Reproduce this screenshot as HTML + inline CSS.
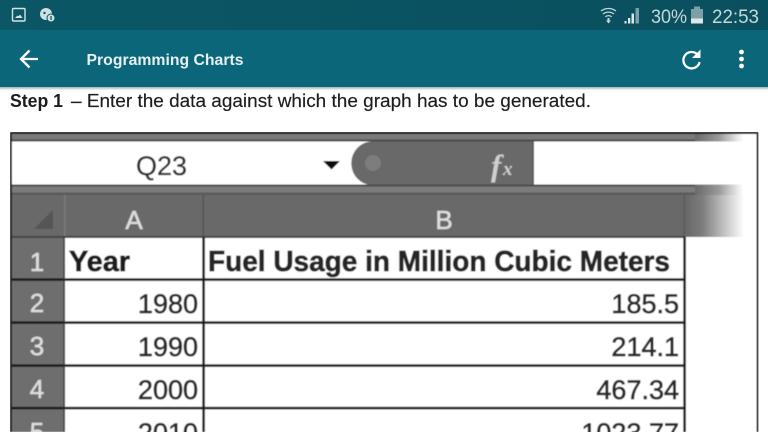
<!DOCTYPE html>
<html>
<head>
<meta charset="utf-8">
<style>
html,body{margin:0;padding:0;width:768px;height:432px;overflow:hidden;background:#fff}
svg{display:block;position:absolute;left:0;top:0}
text{font-family:"Liberation Sans",sans-serif}
</style>
</head>
<body>
<svg width="768" height="432" viewBox="0 0 768 432" xmlns="http://www.w3.org/2000/svg">
<defs>
<linearGradient id="top" x1="0" x2="1" y1="0" y2="0">
<stop offset="0" stop-color="#0b5766"/><stop offset="1" stop-color="#0a4f5e"/>
</linearGradient>
<linearGradient id="fadeH" x1="0" x2="1" y1="0" y2="0">
<stop offset="0" stop-color="#666"/><stop offset="0.3" stop-color="#7c7c7c"/><stop offset="0.7" stop-color="#c8c8c8"/><stop offset="1" stop-color="#fff"/>
</linearGradient>
<linearGradient id="fadeL" x1="0" x2="1" y1="0" y2="0">
<stop offset="0" stop-color="#6a6a6a"/><stop offset="0.5" stop-color="#9a9a9a"/><stop offset="1" stop-color="#fff"/>
</linearGradient>
<linearGradient id="shadow" x1="0" x2="0" y1="0" y2="1">
<stop offset="0" stop-color="#9fb6bb"/><stop offset="1" stop-color="#f4f6f6"/>
</linearGradient>
<filter id="soft" x="0" y="0" width="100%" height="100%"><feGaussianBlur stdDeviation="0.4"/></filter>
</defs>

<!-- status bar -->
<rect width="768" height="30" fill="url(#top)"/>
<rect x="12.500" y="8.500" width="12.500" height="12.500" rx="1" fill="none" stroke="#d5e3e6" stroke-width="1.400"/>
<path d="M15 18l2.500-2.500 1.200.8 1.300-1.800 2.600 3.500z" fill="#d5e3e6"/>
<circle cx="46" cy="14" r="6" fill="#d0dfe2"/>
<circle cx="44.500" cy="13" r="1.200" fill="#0b5766"/>
<circle cx="51" cy="18" r="4" fill="#d0dfe2" stroke="#0b5766" stroke-width="1"/>
<rect x="50.400" y="16" width="1.300" height="4" fill="#0b5766"/>

<!-- wifi -->
<path d="M601 11a12.500 12.500 0 0 1 15 0M603 14a9 9 0 0 1 11 0M605.300 16.800a5 5 0 0 1 6.400 0" fill="none" stroke="#c2d6da" stroke-width="1.300"/>
<path d="M607.500 18h2v2.500h1.500l-2.500 3-2.500-3h1.500z" fill="#c2d6da"/>
<!-- signal -->
<path d="M624.500 23.500h2v-2.500h-2zM628 23.500h2.300v-5.500h-2.300zM631.500 23.500h2.500v-10h-2.500z" fill="#dbe7e9"/>
<path d="M635.500 23.500h3.500V8h-3.500z" fill="#7d9fa7"/>
<text x="651" y="23" font-size="19" fill="#c5d8dc" textLength="36" lengthAdjust="spacingAndGlyphs">30%</text>
<rect x="691" y="9" width="12" height="14.500" fill="#7d9fa7"/>
<rect x="694" y="6.500" width="6" height="3" fill="#7d9fa7"/>
<rect x="691" y="18.500" width="12" height="5" fill="#dbe7e9"/>
<text x="712" y="23" font-size="19" fill="#c5d8dc" textLength="47" lengthAdjust="spacingAndGlyphs">22:53</text>

<!-- app bar -->
<rect y="30" width="768" height="57" fill="#0a6678"/>
<rect y="87" width="768" height="3" fill="url(#shadow)"/>
<path d="M38 59H21M29.500 50.500L21 59l8.500 8.500" fill="none" stroke="#fff" stroke-width="2.300"/>
<text x="86.500" y="65" font-size="16" font-weight="700" fill="#e6f0f2" textLength="157" lengthAdjust="spacingAndGlyphs">Programming Charts</text>
<path d="M697.500 54.500A8.200 8.200 0 1 0 699.600 62" fill="none" stroke="#fff" stroke-width="2.300"/>
<path d="M700.500 49.500v8.500h-8.500z" fill="#fff"/>
<circle cx="741.500" cy="52" r="2.400" fill="#fff"/>
<circle cx="741.500" cy="59" r="2.400" fill="#fff"/>
<circle cx="741.500" cy="66" r="2.400" fill="#fff"/>

<!-- step text -->
<text x="10" y="107" font-size="18" font-weight="700" fill="#1c1c1c" textLength="53" lengthAdjust="spacingAndGlyphs">Step 1</text>
<text x="71" y="107" font-size="18.500" fill="#1c1c1c" stroke="#1c1c1c" stroke-width="0.150" textLength="520" lengthAdjust="spacingAndGlyphs">– Enter the data against which the graph has to be generated.</text>

<!-- picture -->
<g filter="url(#soft)">
<rect x="10" y="132" width="748" height="300" fill="#fff"/>
<rect x="10" y="132" width="748" height="2" fill="#111"/>
<rect x="10" y="132" width="2" height="300" fill="#222"/>
<rect x="756.500" y="132" width="2" height="300" fill="#222"/>

<!-- top gray band -->
<rect x="12" y="134" width="685" height="7" fill="#7a7a7a"/>
<rect x="12" y="139.500" width="685" height="2" fill="#4a4a4a"/>
<rect x="695" y="134" width="48" height="7.500" fill="url(#fadeL)"/>

<!-- name box -->
<text x="136" y="175" font-size="27" fill="#2d2d2d" stroke="#2d2d2d" stroke-width="0.300" textLength="51" lengthAdjust="spacingAndGlyphs">Q23</text>
<path d="M323 161h17l-8.500 8.500z" fill="#111"/>

<!-- fx pill -->
<path d="M533 141.500H372a20.500 21.500 0 0 0 0 43.500H533z" fill="#696969"/>
<circle cx="373" cy="163" r="8" fill="#7d7d7d"/>
<text x="491" y="176" font-size="31" font-style="italic" font-weight="700" fill="#cfcfcf" style="font-family:'Liberation Serif',serif">f</text>
<text x="503" y="175" font-size="19" font-style="italic" font-weight="700" fill="#cfcfcf" style="font-family:'Liberation Serif',serif">x</text>
<rect x="532.500" y="141" width="1.500" height="44" fill="#555"/>

<!-- second gray band -->
<rect x="12" y="184.500" width="685" height="10" fill="#7c7c7c"/>
<rect x="12" y="184.500" width="685" height="2" fill="#4c4c4c"/>
<rect x="12" y="192.500" width="685" height="2.500" fill="#5a5a5a"/>
<rect x="695" y="184.500" width="48" height="10.500" fill="url(#fadeL)"/>

<!-- header -->
<rect x="12" y="195" width="672" height="42" fill="#696969"/>
<rect x="684" y="195" width="60" height="42" fill="url(#fadeH)"/>
<rect x="64" y="195" width="1.500" height="42" fill="#7a7a7a"/>
<rect x="202.500" y="195" width="1.500" height="42" fill="#555"/>
<rect x="683.500" y="195" width="1.500" height="42" fill="#5a5a5a"/>
<path d="M34 229l19-19v19z" fill="#555"/>
<g font-size="26" fill="#dcdcdc" stroke="#dcdcdc" stroke-width="0.500" text-anchor="middle">
<text x="134" y="229">A</text>
<text x="444" y="229">B</text>
</g>

<!-- row header -->
<rect x="12" y="237" width="52" height="195" fill="#6e6e6e"/>
<g font-size="26" fill="#dcdcdc" stroke="#dcdcdc" stroke-width="0.500" text-anchor="middle">
<text x="37" y="271">1</text>
<text x="37" y="312">2</text>
<text x="37" y="355">3</text>
<text x="37" y="398">4</text>
<text x="37" y="441">5</text>
</g>

<!-- grid -->
<rect x="12" y="236" width="673" height="2" fill="#444"/>
<rect x="12" y="278.300" width="673" height="2.600" fill="#1e1e1e"/>
<rect x="12" y="321.300" width="673" height="2.600" fill="#1e1e1e"/>
<rect x="12" y="364.300" width="673" height="2.600" fill="#1e1e1e"/>
<rect x="12" y="406.800" width="673" height="2.600" fill="#1e1e1e"/>
<rect x="63.500" y="237" width="1.500" height="195" fill="#333"/>
<rect x="202.300" y="237" width="2.600" height="195" fill="#1e1e1e"/>
<rect x="683.300" y="237" width="2.600" height="195" fill="#1e1e1e"/>

<!-- cell text -->
<text x="69" y="271" font-size="29" font-weight="700" fill="#1e1e1e" stroke="#1e1e1e" stroke-width="0.700" textLength="61" lengthAdjust="spacingAndGlyphs">Year</text>
<text x="208" y="271" font-size="29" font-weight="700" fill="#262626" stroke="#262626" stroke-width="0.700" textLength="462" lengthAdjust="spacingAndGlyphs">Fuel Usage in Million Cubic Meters</text>

<g font-size="27" fill="#2c2c2c" stroke="#2c2c2c" stroke-width="0.700" text-anchor="end">
<text x="198" y="313">1980</text>
<text x="198" y="356">1990</text>
<text x="198" y="399">2000</text>
<text x="198" y="442">2010</text>
<text x="679" y="313">185.5</text>
<text x="679" y="356">214.1</text>
<text x="679" y="399">467.34</text>
<text x="679" y="442">1023.77</text>
</g>
</g>
</svg>
</body>
</html>
